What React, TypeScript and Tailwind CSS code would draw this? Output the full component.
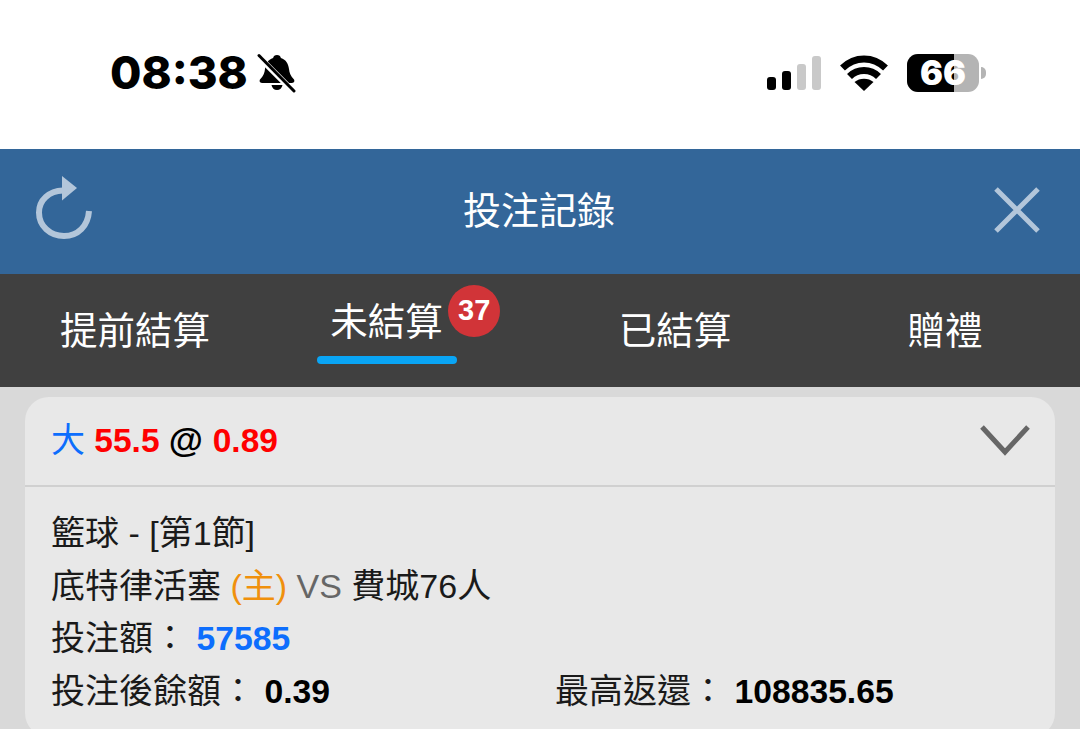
const cjk = "font-['Liberation_Sans','Noto_Sans_CJK_TC',sans-serif]"

function BellOff() {
  return (
    <svg width="40" height="40" viewBox="0 0 40 40" fill="none">
      <path d="M20 2c2.200 0 3.500 1.200 3.900 3C29 6.500 31.500 11 32 16c.4 4 1.500 6.500 4.800 10.300 1.200 1.600.4 3.700-1.800 3.700H5c-2.200 0-3-2.100-1.800-3.700C6.500 22.500 7.600 20 8 16c.5-5 3-9.500 8.100-11C16.500 3.200 17.800 2 20 2z" fill="#000" />
      <path d="M14.500 32h11c-.5 3-2.700 5-5.500 5s-5-2-5.500-5z" fill="#000" />
      <path d="M1 3l36 36" stroke="#fff" strokeWidth="6" />
      <path d="M2 2.500l35 35.500" stroke="#000" strokeWidth="3" strokeLinecap="round" />
    </svg>
  )
}

function StatusIcons() {
  return (
    <div className="flex items-center">
      <div className="flex items-end gap-[6px] mr-[19px]">
        <span className="block w-[9px] h-[13px] rounded-[3px] bg-black" />
        <span className="block w-[9px] h-[19px] rounded-[3px] bg-black" />
        <span className="block w-[9px] h-[26px] rounded-[3px] bg-[#c9c9c9]" />
        <span className="block w-[9px] h-[34px] rounded-[3px] bg-[#c9c9c9]" />
      </div>
      <svg width="48" height="36" viewBox="0 0 48 36" className="mr-[19px]">
        <path d="M24 36l-9.500-9c5-4.500 14-4.500 19 0z" fill="#000" />
        <path d="M9.500 21.500c8-8 21-8 29 0" stroke="#000" strokeWidth="7" fill="none" />
        <path d="M2.500 13C15 1 33 1 45.500 13" stroke="#000" strokeWidth="7" fill="none" />
      </svg>
      <div className="relative w-[72px] h-[38px] rounded-[11px] bg-[#b4b4b4]">
        <div className="h-full w-[47px] rounded-l-[11px] bg-black" />
        <span className="absolute inset-0 flex items-center justify-center font-['Inter',sans-serif] font-black text-[34px] leading-none text-white">
          66
        </span>
      </div>
      <span className="block w-[5px] h-[12px] ml-[2px] rounded-r-full bg-[#b4b4b4]" />
    </div>
  )
}

const tabs = [
  { label: "提前結算" },
  { label: "未結算", active: true, badge: "37" },
  { label: "已結算" },
  { label: "贈禮" },
]

export default function App() {
  return (
    <div className={`h-[729px] overflow-hidden bg-[#d9d9d9] ${cjk}`}>
      <div className="h-[149px] bg-white flex items-center justify-between pl-[110px] pr-[94px] pb-[4px]">
        <div className="flex items-center gap-[9px]">
          <span className="font-['Inter',sans-serif] font-extrabold text-[45.500px] leading-none text-black">08:38</span>
          <BellOff />
        </div>
        <StatusIcons />
      </div>

      <div className="h-[125px] bg-[#336699] grid grid-cols-[1fr_auto_1fr] items-center pl-[35px] pr-[39px]">
        <svg width="62" height="66" viewBox="0 0 62 66" fill="none" className="-mt-[5px]">
          <path d="M28 14.500C14 15 4 24 4 36.500 4 50 15 60 29 60s24-10 25-25" stroke="#b3c6da" strokeWidth="6" />
          <path d="M27 0l15 12-15 12.500z" fill="#b3c6da" />
        </svg>
        <span className="text-[38px] leading-none text-white -mt-[2px] translate-x-[1px]">投注記錄</span>
        <svg width="48" height="48" viewBox="0 0 48 48" fill="none" className="justify-self-end -mt-[4px]">
          <path d="M3 3l42 42M45 3L3 45" stroke="#b3c6da" strokeWidth="5" />
        </svg>
      </div>

      <div className="h-[113px] bg-[#404040] grid grid-cols-4">
        {tabs.map((tab) => (
          <div key={tab.label} className={`flex items-center justify-center ${tab.active ? "pr-[37px]" : "pt-[3px]"}`}>
            <div className="relative">
              <span className={`block text-[37.500px] leading-none text-white ${tab.active ? "-mt-[16px]" : ""}`}>{tab.label}</span>
              {tab.badge ? (
                <>
                  <span className="absolute left-[118px] -top-[35px] w-[52px] h-[52px] rounded-full bg-[#d13438] flex items-center justify-center text-[29px] font-bold text-white">
                    {tab.badge}
                  </span>
                  <span className="absolute -left-[13px] -right-[14px] top-[36px] h-[8px] rounded-full bg-[#0aa5f5]" />
                </>
              ) : null}
            </div>
          </div>
        ))}
      </div>

      <div className="px-[25px] pt-[10px]">
        <div className="rounded-[24px] bg-[#e8e8e8] h-[340px]">
          <div className="h-[90px] border-b-[2px] border-[#d0d0d0] flex items-center justify-between pl-[26px] pr-[25px]">
            <div className="text-[33.500px] font-bold leading-none -mt-[2px]">
              <span className="font-normal text-[34px] text-[#0d6efd]">大</span>
              <span className="text-[#ff0000]"> 55.5 </span>
              <span className="text-[35px] text-black">@ </span>
              <span className="text-[#ff0000]">0.89</span>
            </div>
            <svg width="50" height="32" viewBox="0 0 50 32" fill="none" className="-mt-[2px]">
              <path d="M2 3l23 25L48 3" stroke="#666" strokeWidth="5" />
            </svg>
          </div>
          <div className="pl-[26px] pt-[20px] text-[34px] leading-[52.500px] text-[#1a1a1a]">
            <div>籃球 - [第1節]</div>
            <div>
              底特律活塞 <span className="text-[#f0900c]">(主)</span> <span className="text-[#666]">VS</span> 費城76人
            </div>
            <div>
              投注額： <span className="text-[33.700px] font-bold text-[#0d6efd]">57585</span>
            </div>
            <div className="flex">
              <div className="w-[504px]">
                投注後餘額： <span className="text-[33.700px] font-bold text-black">0.39</span>
              </div>
              <div>
                最高返還： <span className="text-[33.700px] font-bold text-black">108835.65</span>
              </div>
            </div>
          </div>
        </div>
      </div>
    </div>
  )
}
